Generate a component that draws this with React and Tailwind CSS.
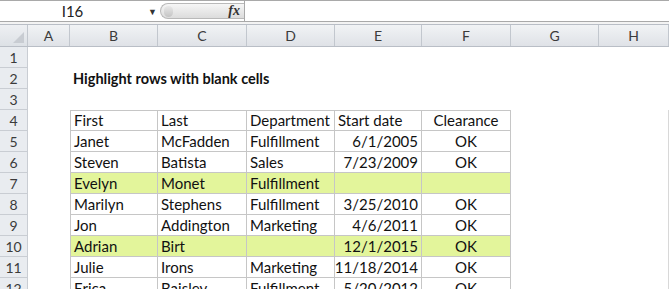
import React from 'react'

const COLS = ['A', 'B', 'C', 'D', 'E', 'F', 'G', 'H']
const GRID = 'grid grid-cols-[28px_42px_88px_89px_88px_87px_89px_88px_1fr]'

const rows = [
  { first: 'Janet', last: 'McFadden', dept: 'Fulfillment', start: '6/1/2005', clr: 'OK' },
  { first: 'Steven', last: 'Batista', dept: 'Sales', start: '7/23/2009', clr: 'OK' },
  { first: 'Evelyn', last: 'Monet', dept: 'Fulfillment', start: '', clr: '' },
  { first: 'Marilyn', last: 'Stephens', dept: 'Fulfillment', start: '3/25/2010', clr: 'OK' },
  { first: 'Jon', last: 'Addington', dept: 'Marketing', start: '4/6/2011', clr: 'OK' },
  { first: 'Adrian', last: 'Birt', dept: '', start: '12/1/2015', clr: 'OK' },
  { first: 'Julie', last: 'Irons', dept: 'Marketing', start: '11/18/2014', clr: 'OK' },
  { first: 'Erica', last: 'Baisley', dept: 'Fulfillment', start: '5/20/2012', clr: 'OK' },
]

// any empty field in the row triggers the highlight
const hasBlank = (r) => !r.first || !r.last || !r.dept || !r.start || !r.clr

function RowHead({ n }) {
  return (
    <div className="flex h-[21px] items-center justify-center border-r border-b border-[#c9cdd3] bg-[#e9ecf0] text-[14px] text-[#3b3b3b]">
      {n}
    </div>
  )
}

function Cell({ children, hl, left, top, align = 'left' }) {
  return (
    <div
      className={`flex h-[21px] items-center overflow-hidden whitespace-nowrap border-r border-b border-[#c6c6c6] px-[3px] text-[15px] text-[#111] ${
        hl ? 'bg-[#e3f59b]' : 'bg-white'
      } ${left ? 'border-l' : ''} ${top ? 'border-t' : ''} ${
        align === 'right' ? 'justify-end' : align === 'center' ? 'justify-center' : 'justify-start'
      }`}
    >
      {children}
    </div>
  )
}

const Blank = () => <div className="h-[21px] bg-white" />
const Edge = () => <div className="h-[21px] border-r border-[#d8d8d8]" />

export default function App() {
  return (
    <div className="h-[289px] w-[669px] overflow-hidden bg-white font-['Lato','Liberation_Sans',sans-serif]">
      {/* formula bar */}
      <div className="flex h-[22px] border-t border-b border-[#a9a9a9] bg-white">
        <div className="flex w-[145px] items-center justify-center text-[15px] text-[#222]">I16</div>
        <div className="flex w-[15px] items-center justify-center pt-[1px] text-[9px] text-[#333]">▼</div>
        <div className="my-[2px] flex w-[84px] items-center justify-between rounded-l-full border border-r-0 border-[#b9b9b9] bg-gradient-to-b from-[#f6f6f6] to-[#dcdcdc] pl-[3px] pr-[4px]">
          <div className="h-[11px] w-[9px] rounded-full bg-gradient-to-b from-[#e9e9e9] to-[#c4c4c4]" />
          <span className="font-['Liberation_Serif',serif] text-[14px] font-bold italic leading-none text-[#333]">fx</span>
        </div>
        <div className="flex-1 border-l border-[#a9a9a9] bg-white" />
      </div>
      <div className="h-[2px] bg-[#f3f3f3]" />

      {/* column headers */}
      <div className={`${GRID} h-[23px] border-t border-b border-[#b9bec6]`}>
        <div className="relative border-r border-[#c2c7ce] bg-gradient-to-b from-[#eef0f3] to-[#dde1e6]">
          <div className="absolute right-[3px] bottom-[3px] h-[11px] w-[11px] bg-[#c8ccd2] [clip-path:polygon(100%_0,100%_100%,0_100%)]" />
        </div>
        {COLS.map((c) => (
          <div
            key={c}
            className="flex items-center justify-center border-r border-[#c2c7ce] bg-gradient-to-b from-[#f1f3f5] to-[#dfe2e7] text-[14px] text-[#3b3b3b]"
          >
            {c}
          </div>
        ))}
      </div>

      {/* sheet body */}
      <div className={GRID}>
        {[1, 2, 3].map((n) => (
          <React.Fragment key={n}>
            <RowHead n={n} />
            <Blank />
            {n === 2 ? (
              <div className="col-span-4 flex h-[21px] items-center whitespace-nowrap px-[3px] text-[14.5px] font-bold text-[#111]">
                Highlight rows with blank cells
              </div>
            ) : (
              <div className="col-span-4 h-[21px]" />
            )}
            <div className="col-span-3 h-[21px]" />
          </React.Fragment>
        ))}

        <RowHead n={4} />
        <Blank />
        <Cell left top>First</Cell>
        <Cell top>Last</Cell>
        <Cell top>Department</Cell>
        <Cell top>Start date</Cell>
        <Cell top align="center">Clearance</Cell>
        <Blank />
        <Edge />

        {rows.map((r, i) => {
          const hl = hasBlank(r)
          return (
            <React.Fragment key={r.first}>
              <RowHead n={i + 5} />
              <Blank />
              <Cell left hl={hl}>{r.first}</Cell>
              <Cell hl={hl}>{r.last}</Cell>
              <Cell hl={hl}>{r.dept}</Cell>
              <Cell hl={hl} align="right">{r.start}</Cell>
              <Cell hl={hl} align="center">{r.clr}</Cell>
              <Blank />
              <Edge />
            </React.Fragment>
          )
        })}
      </div>
    </div>
  )
}
